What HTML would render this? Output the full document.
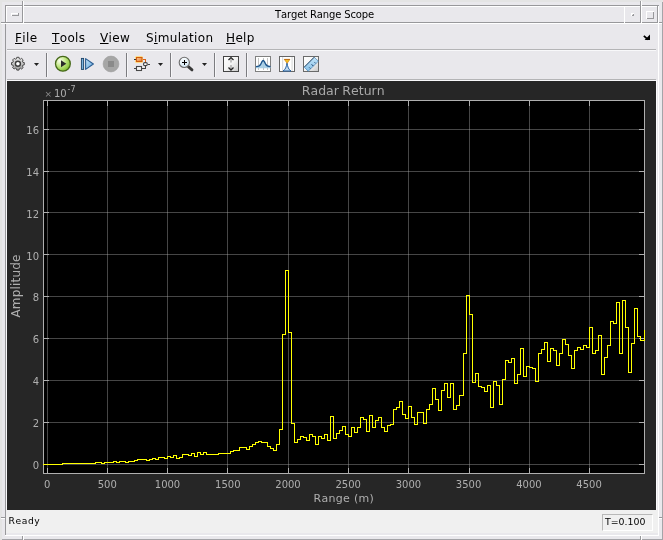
<!DOCTYPE html>
<html><head><meta charset="utf-8">
<style>
html,body{margin:0;padding:0;}
body{width:663px;height:540px;position:relative;overflow:hidden;background:#e4e4e4;font-family:"DejaVu Sans","Liberation Sans",sans-serif;font-kerning:none;}
.a{position:absolute;}
.d{position:absolute;background:#98989b;}
.w{position:absolute;background:#fff;}
.t{position:absolute;white-space:nowrap;line-height:1;}
.m{font-size:12px;color:#000;top:32px;letter-spacing:0.350px;}
.xl{font-size:10px;color:#afafaf;top:480px;width:40px;text-align:center;}
.yl{font-size:10px;color:#afafaf;width:30px;text-align:right;left:9px;}
svg{position:absolute;left:0;top:0;}
</style></head><body><div class="a" id="root" style="left:0;top:0;width:663px;height:540px;will-change:transform;">
<div class="a" style="left:2px;top:2px;width:660px;height:537px;background:#e9e8ec;"></div>
<div class="a" style="left:662px;top:2px;width:1px;height:538px;background:#a4a4a8;"></div>
<div class="a" style="left:2px;top:539px;width:661px;height:1px;background:#a4a4a8;"></div>
<div class="d" style="left:5px;top:5px;width:654px;height:1px"></div>
<div class="d" style="left:5px;top:5px;width:1px;height:531px"></div>
<div class="w" style="left:658px;top:6px;width:1px;height:530px"></div>
<div class="w" style="left:5px;top:535px;width:654px;height:1px"></div>
<div class="w" style="left:6px;top:6px;width:651px;height:1px"></div>
<div class="w" style="left:6px;top:6px;width:1px;height:17px"></div>
<div class="d" style="left:1px;top:22px;width:657px;height:1px"></div>
<div class="w" style="left:1px;top:23px;width:657px;height:1px"></div>
<div class="d" style="left:22px;top:1px;width:1px;height:22px"></div>
<div class="w" style="left:23px;top:1px;width:1px;height:22px"></div>
<div class="w" style="left:624px;top:6px;width:1px;height:17px"></div>
<div class="d" style="left:640px;top:1px;width:1px;height:22px"></div>
<div class="w" style="left:641px;top:1px;width:1px;height:22px"></div>
<div class="d" style="left:657px;top:6px;width:1px;height:17px"></div>
<div class="d" style="left:659px;top:22px;width:3px;height:1px"></div>
<div class="w" style="left:659px;top:23px;width:3px;height:1px"></div>
<div class="w" style="left:11px;top:13px;width:7px;height:1px"></div>
<div class="w" style="left:11px;top:13px;width:1px;height:3px"></div>
<div class="d" style="left:12px;top:15px;width:7px;height:1px"></div>
<div class="d" style="left:18px;top:13px;width:1px;height:3px"></div>
<div class="w" style="left:631px;top:13px;width:3px;height:1px"></div>
<div class="w" style="left:631px;top:13px;width:1px;height:3px"></div>
<div class="d" style="left:632px;top:15px;width:2px;height:1px"></div>
<div class="d" style="left:633px;top:14px;width:1px;height:2px"></div>
<div class="w" style="left:646px;top:11px;width:8px;height:1px"></div>
<div class="w" style="left:646px;top:11px;width:1px;height:8px"></div>
<div class="d" style="left:647px;top:18px;width:7px;height:1px"></div>
<div class="d" style="left:653px;top:12px;width:1px;height:7px"></div>
<div class="d" style="left:1px;top:517px;width:4px;height:1px"></div>
<div class="w" style="left:1px;top:518px;width:4px;height:1px"></div>
<div class="d" style="left:659px;top:517px;width:3px;height:1px"></div>
<div class="w" style="left:659px;top:518px;width:3px;height:1px"></div>
<div class="d" style="left:22px;top:536px;width:1px;height:4px"></div>
<div class="w" style="left:23px;top:536px;width:1px;height:4px"></div>
<div class="d" style="left:640px;top:536px;width:1px;height:4px"></div>
<div class="w" style="left:641px;top:536px;width:1px;height:4px"></div>
<div class="t" id="title" style="left:275px;top:10px;font-size:10px;color:#000;letter-spacing:-0.14px">Target Range Scope</div>
<div class="t m" style="left:15px"><u>F</u>ile</div>
<div class="t m" style="left:52px"><u>T</u>ools</div>
<div class="t m" style="left:100px"><u>V</u>iew</div>
<div class="t m" style="left:146px">S<u>i</u>mulation</div>
<div class="t m" style="left:226px"><u>H</u>elp</div>
<svg width="663" height="540" viewBox="0 0 663 540" style="pointer-events:none"><path d="M650 34.600V40H644.600Z" fill="#000"/><path d="M643.800 35.800L648 39.500" stroke="#000" stroke-width="1.700" fill="none"/></svg>
<div class="a" style="left:7px;top:49px;width:649px;height:1px;background:#b4b4b6"></div>
<div class="a" style="left:7px;top:50px;width:649px;height:1px;background:#f8f8fa"></div>
<div class="a" style="left:7px;top:79px;width:649px;height:1px;background:#b4b4b6"></div>
<div class="a" style="left:7px;top:80px;width:649px;height:1px;background:#f8f8fa"></div>
<div class="a" style="left:6px;top:80px;width:1px;height:430px;background:#f8f8fa"></div>
<div class="a" style="left:656px;top:80px;width:1px;height:430px;background:#fcfcfe"></div>
<div class="a" style="left:46px;top:53px;width:1px;height:24px;background:#7c7c80"></div><div class="a" style="left:47px;top:53px;width:1px;height:24px;background:#f6f6f8"></div>
<div class="a" style="left:126px;top:53px;width:1px;height:24px;background:#7c7c80"></div><div class="a" style="left:127px;top:53px;width:1px;height:24px;background:#f6f6f8"></div>
<div class="a" style="left:170px;top:53px;width:1px;height:24px;background:#7c7c80"></div><div class="a" style="left:171px;top:53px;width:1px;height:24px;background:#f6f6f8"></div>
<div class="a" style="left:214px;top:53px;width:1px;height:24px;background:#7c7c80"></div><div class="a" style="left:215px;top:53px;width:1px;height:24px;background:#f6f6f8"></div>
<div class="a" style="left:246px;top:53px;width:1px;height:24px;background:#7c7c80"></div><div class="a" style="left:247px;top:53px;width:1px;height:24px;background:#f6f6f8"></div>
<svg width="663" height="540" viewBox="0 0 663 540">
<defs>
<linearGradient id="gg" x1="0" y1="0" x2="0" y2="1"><stop offset="0" stop-color="#ececec"/><stop offset="1" stop-color="#9a9a9a"/></linearGradient>
<radialGradient id="gp" cx="0.3" cy="0.3" r="0.8"><stop offset="0" stop-color="#fbfff0"/><stop offset="0.45" stop-color="#c4e888"/><stop offset="1" stop-color="#7cbc28"/></radialGradient>
<linearGradient id="gb" x1="0" y1="0" x2="1" y2="1"><stop offset="0" stop-color="#ffffff"/><stop offset="0.5" stop-color="#f4f4f4"/><stop offset="1" stop-color="#c8c8c8"/></linearGradient>
<linearGradient id="gs" x1="0" y1="0" x2="1" y2="0"><stop offset="0" stop-color="#8ab4e0"/><stop offset="1" stop-color="#2a5a9a"/></linearGradient>
<linearGradient id="gr" x1="0" y1="0" x2="0" y2="1"><stop offset="0" stop-color="#c4e4f8"/><stop offset="1" stop-color="#84c0e8"/></linearGradient>
<linearGradient id="gt" x1="0" y1="0" x2="1" y2="1"><stop offset="0" stop-color="#c8e4f8"/><stop offset="1" stop-color="#5ca4dc"/></linearGradient>
<linearGradient id="go" x1="0" y1="0" x2="1" y2="1"><stop offset="0" stop-color="#fcd0a0"/><stop offset="1" stop-color="#e87828"/></linearGradient>
<linearGradient id="gl" x1="0" y1="0" x2="0.300" y2="1"><stop offset="0" stop-color="#ffffff"/><stop offset="1" stop-color="#d4e8f4"/></linearGradient>
</defs>
<path d="M22.92 62.33 L24.30 62.58 L24.30 64.82 L22.92 65.07 L22.42 66.28 L23.22 67.44 L21.64 69.02 L20.48 68.22 L19.27 68.72 L19.02 70.10 L16.78 70.10 L16.53 68.72 L15.32 68.22 L14.16 69.02 L12.58 67.44 L13.38 66.28 L12.88 65.07 L11.50 64.82 L11.50 62.58 L12.88 62.33 L13.38 61.12 L12.58 59.96 L14.16 58.38 L15.32 59.18 L16.53 58.68 L16.78 57.30 L19.02 57.30 L19.27 58.68 L20.48 59.18 L21.64 58.38 L23.22 59.96 L22.42 61.12Z" fill="url(#gg)" stroke="#4a4a4a" stroke-width="1" stroke-linejoin="round"/>
<circle cx="17.9" cy="63.7" r="2.5" fill="#fff" stroke="#3c3c3c" stroke-width="1.4"/>
<path d="M34 63h5l-2.5 3z" fill="#222"/>
<path d="M158 63h5l-2.5 3z" fill="#222"/>
<path d="M202 63h5l-2.5 3z" fill="#222"/>
<circle cx="62.9" cy="63.8" r="7.4" fill="url(#gp)" stroke="#46681a" stroke-width="1.3"/>
<path d="M61 60.300 L66.300 63.800 L61 67.300z" fill="#2a2a2a"/>
<rect x="81.400" y="58.400" width="2.200" height="11" fill="#7ab0dc" stroke="#1c4468" stroke-width="0.9"/>
<path d="M85.6 58.6 L93.4 64 L85.6 69.4z" fill="url(#gt)" stroke="#2a5c90" stroke-width="1.1" stroke-linejoin="round"/>
<circle cx="111" cy="64" r="7.900" fill="#a6a6a6" stroke="#9c9c9c" stroke-width="0.600"/>
<rect x="108" y="61" width="6" height="6" fill="#8a8a8a"/>
<rect x="135" y="56" width="8" height="7" rx="1.5" fill="#ffe08c"/>
<rect x="136.500" y="57.500" width="5.500" height="4" fill="url(#go)" stroke="#d05c10" stroke-width="1.1"/>
<g shape-rendering="crispEdges">
<path d="M134 59.500h2" stroke="#333" stroke-width="1" fill="none"/>
<path d="M142.500 59.500h3v3" stroke="#d8621a" stroke-width="1.2" fill="none"/>
<path d="M134 68.500h2 M142 68.500h3.500v-3 M147.500 64.500h2.500" stroke="#444" stroke-width="1" fill="none"/>
</g>
<rect x="136.500" y="66.500" width="5" height="4" fill="#f4f4f4" stroke="#484848" stroke-width="1.1"/>
<rect x="143.500" y="62.600" width="3.800" height="3" rx="1.300" fill="#fff" stroke="#444" stroke-width="1.100"/>
<path d="M188.300 66.600 L192 69.900" stroke="#383838" stroke-width="2.800" stroke-linecap="round"/>
<circle cx="184.300" cy="62.400" r="5.100" fill="url(#gl)" stroke="#6c6c6c" stroke-width="1.100"/>
<path d="M182 62.500h5 M184.500 60v5" stroke="#000" stroke-width="1" shape-rendering="crispEdges"/>
<rect x="223.500" y="56.500" width="15" height="15" fill="url(#gb)" stroke="#444" stroke-width="1"/>
<path d="M228.500 60 L231 57.600 L233.500 60" stroke="#222" stroke-width="1.3" fill="none"/>
<path d="M231 59v3.500 M231 65v4" stroke="#aaa" stroke-width="1.4"/>
<path d="M228.500 67.500 L231 70 L233.500 67.500" stroke="#222" stroke-width="1.3" fill="none"/>
<rect x="255.500" y="56.500" width="15" height="15" fill="#fff" stroke="#808080" stroke-width="1"/>
<path d="M258.500 58v12 M263.500 58v12 M267.500 58v12" stroke="#c4c4c4" stroke-width="1" shape-rendering="crispEdges"/>
<path d="M256 66.700 C259 66.700 260 66.200 261 63.800 C262 61.300 262.500 60.500 263.200 60.500 C263.900 60.500 264.400 61.300 265.400 63.800 C266.400 66.200 267.400 66.700 270.500 66.700 L270.500 68.300 L256 68.300z" fill="#a4cce4" fill-opacity="0.9"/>
<path d="M256 66.700 C259 66.700 260 66.200 261 63.800 C262 61.300 262.500 60.500 263.200 60.500 C263.900 60.500 264.400 61.300 265.400 63.800 C266.400 66.200 267.400 66.700 270.500 66.700" fill="none" stroke="#1c548c" stroke-width="1.300"/>
<rect x="279.500" y="56.500" width="15" height="15" fill="#fff" stroke="#666" stroke-width="1"/>
<rect x="282" y="57" width="1.200" height="14" fill="#dcdcdc"/><rect x="291.500" y="57" width="1.200" height="14" fill="#dcdcdc"/>
<path d="M283 71 C285.500 69.500 286.300 67 287 63 C287.700 67 288.500 69.500 291 71z" fill="#c4dcf0" stroke="#2a64a4" stroke-width="1"/>
<path d="M284.400 59.500h5.400l-2.700 3.800z" fill="#f4c020" stroke="#d08010" stroke-width="0.700"/>
<path d="M284.200 59.400h5.800" stroke="#c06c10" stroke-width="1"/>
<rect x="303.500" y="56.500" width="15" height="15" fill="url(#gb)" stroke="#6a6a6a" stroke-width="1"/>
<path d="M304.200 67.200 L314.200 57.200 L318.300 61.200 L308.200 71.200z" fill="url(#gr)" stroke="#4a86b8" stroke-width="0.700"/>
<path d="M304.200 67.200 L314.200 57.200" stroke="#2a4660" stroke-width="0.900"/>
<path d="M309.300 67.500l1 1 M311.600 64.300l1.800 1.800 M314.600 62.300l1 1" stroke="#1c3c64" stroke-width="1"/>
</svg>

<div class="a" style="left:7px;top:81px;width:649px;height:429px;background:#262626"></div>
<div class="a" style="left:43px;top:100px;width:602px;height:374px;background:#000"></div>
<svg width="663" height="540" viewBox="0 0 663 540" shape-rendering="crispEdges">
<g stroke="#afafaf" stroke-opacity="0.4" stroke-width="1">
<path d="M47.5 101V473"/>
<path d="M107.5 101V473"/>
<path d="M167.5 101V473"/>
<path d="M227.5 101V473"/>
<path d="M288.5 101V473"/>
<path d="M348.5 101V473"/>
<path d="M408.5 101V473"/>
<path d="M469.5 101V473"/>
<path d="M529.5 101V473"/>
<path d="M589.5 101V473"/>
<path d="M44 464.5H644"/>
<path d="M44 422.5H644"/>
<path d="M44 380.5H644"/>
<path d="M44 338.5H644"/>
<path d="M44 296.5H644"/>
<path d="M44 254.5H644"/>
<path d="M44 212.5H644"/>
<path d="M44 171.5H644"/>
<path d="M44 129.5H644"/>
</g>
<g stroke="#afafaf" stroke-width="1">
<path d="M47.5 468V473"/><path d="M47.5 101V106"/>
<path d="M107.5 468V473"/><path d="M107.5 101V106"/>
<path d="M167.5 468V473"/><path d="M167.5 101V106"/>
<path d="M227.5 468V473"/><path d="M227.5 101V106"/>
<path d="M288.5 468V473"/><path d="M288.5 101V106"/>
<path d="M348.5 468V473"/><path d="M348.5 101V106"/>
<path d="M408.5 468V473"/><path d="M408.5 101V106"/>
<path d="M469.5 468V473"/><path d="M469.5 101V106"/>
<path d="M529.5 468V473"/><path d="M529.5 101V106"/>
<path d="M589.5 468V473"/><path d="M589.5 101V106"/>
<path d="M44 464.5H49"/><path d="M639 464.5H644"/>
<path d="M44 422.5H49"/><path d="M639 422.5H644"/>
<path d="M44 380.5H49"/><path d="M639 380.5H644"/>
<path d="M44 338.5H49"/><path d="M639 338.5H644"/>
<path d="M44 296.5H49"/><path d="M639 296.5H644"/>
<path d="M44 254.5H49"/><path d="M639 254.5H644"/>
<path d="M44 212.5H49"/><path d="M639 212.5H644"/>
<path d="M44 171.5H49"/><path d="M639 171.5H644"/>
<path d="M44 129.5H49"/><path d="M639 129.5H644"/>
</g>
<rect x="43.5" y="100.5" width="601" height="373" fill="none" stroke="#afafaf" stroke-width="1"/>
<path d="M43 464.5H47.5H50.5H53.5H56.5H59.5H62.5V463.5H65.5H68.5H71.5H74.5H77.5H80.5H83.5H86.5H89.5H92.5H95.5V462.5H98.5H101.5V463.5H104.5V462.5H107.5H110.5H113.5V461.5H116.5V462.5H119.5V461.5H122.5H125.5V462.5H128.5V461.5H131.5H134.5V460.5H137.5V459.5H140.5H143.5H146.5V460.5H149.5V459.5H152.5V458.5H155.5V459.5H158.5V457.5H161.5H164.5V458.5H167.5V456.5H170.5V457.5H173.5V455.5H176.5V458.5H179.5V457.5H182.5V454.5H185.5H188.5V455.5H191.5V453.5H194.5V456.5H197.5V452.5H200.5V454.5H203.5V452.5H206.5V454.5H209.5H212.5H215.5H218.5V453.5H221.5H224.5H227.5H230.5V451.5H233.5V450.5H236.5H239.5V447.5H243.5H246.5V449.5H249.5V446.5H252.5V444.5H255.5V442.5H258.5V441.5H261.5V442.5H264.5H267.5V446.5H270.5V448.5H273.5V450.5H276.5V444.5H279.5V429.5H282.5V334.5H285.5V270.5H288.5V332.5H291.5V423.5H294.5V442.5H297.5V439.5H300.5V436.5H303.5V437.5H306.5V440.5H309.5V434.5H312.5V436.5H315.5V444.5H318.5V436.5H321.5V438.5H324.5V434.5H327.5V440.5H330.5V416.5H333.5V438.5H336.5V433.5H339.5V430.5H342.5V426.5H345.5V434.5H348.5V436.5H351.5V427.5H354.5V432.5H357.5V427.5H360.5V417.5H363.5V419.5H366.5V431.5H369.5V415.5H372.5V427.5H375.5V420.5H378.5V417.5H381.5V427.5H384.5V431.5H387.5V425.5H390.5V424.5H393.5V409.5H396.5V407.5H399.5V401.5H402.5V414.5H405.5V418.5H408.5V406.5H411.5V417.5H414.5V424.5H417.5V412.5H420.5H423.5V423.5H426.5V409.5H429.5V404.5H432.5V388.5H435.5V399.5H438.5V410.5H441.5V390.5H444.5V383.5H447.5V397.5H450.5V383.5H453.5V409.5H456.5V405.5H459.5V395.5H463.5V353.5H466.5V295.5H469.5V314.5H472.5V382.5H475.5V373.5H478.5V386.5H481.5V387.5H484.5V391.5H487.5V385.5H490.5V407.5H493.5V381.5H496.5V385.5H499.5V404.5H502.5V379.5H505.5V360.5H508.5V362.5H511.5V358.5H514.5V383.5H517.5V374.5H520.5V348.5H523.5V376.5H526.5V366.5H529.5V367.5H532.5V368.5H535.5V381.5H538.5V353.5H541.5V349.5H544.5V342.5H547.5V361.5H550.5V348.5H553.5V350.5H556.5V365.5H559.5V353.5H562.5V339.5H565.5V344.5H568.5V355.5H571.5V368.5H574.5V350.5H577.5V347.5H580.5V349.5H583.5V345.5H586.5V347.5H589.5V327.5H592.5V353.5H595.5V350.5H598.5V335.5H601.5V374.5H604.5V357.5H607.5V345.5H610.5V321.5H613.5V323.5H616.5V302.5H619.5V353.5H622.5V300.5H625.5V327.5H628.5V372.5H631.5V343.5H634.5V308.5H637.5V336.5H640.5V340.5H644.5V330.5H645" fill="none" stroke="#ffff00" stroke-width="1"/>
</svg>

<div class="t" style="left:301.800px;top:85px;font-size:12.500px;word-spacing:-0.500px;color:#a8a8a8">Radar Return</div>
<div class="t" style="left:313.600px;top:493px;font-size:11px;letter-spacing:0.280px;color:#afafaf">Range (m)</div>
<div class="t" style="left:-24px;top:280px;width:80px;height:12px;text-align:center;font-size:12px;letter-spacing:0.170px;color:#afafaf;transform:rotate(-90deg);transform-origin:center">Amplitude</div>
<div class="t xl" style="left:27.1px">0</div>
<div class="t xl" style="left:87.3px">500</div>
<div class="t xl" style="left:147.5px">1000</div>
<div class="t xl" style="left:207.8px">1500</div>
<div class="t xl" style="left:268.0px">2000</div>
<div class="t xl" style="left:328.2px">2500</div>
<div class="t xl" style="left:388.4px">3000</div>
<div class="t xl" style="left:448.6px">3500</div>
<div class="t xl" style="left:508.9px">4000</div>
<div class="t xl" style="left:569.1px">4500</div>
<div class="t yl" style="top:460.9px">0</div>
<div class="t yl" style="top:419.0px">2</div>
<div class="t yl" style="top:377.1px">4</div>
<div class="t yl" style="top:335.3px">6</div>
<div class="t yl" style="top:293.4px">8</div>
<div class="t yl" style="top:251.5px">10</div>
<div class="t yl" style="top:209.6px">12</div>
<div class="t yl" style="top:167.7px">14</div>
<div class="t yl" style="top:125.9px">16</div>
<div class="t" style="left:44.500px;top:90px;font-size:9px;color:#8c8c8c">×</div><div class="t" style="left:54px;top:89px;font-size:10px;color:#afafaf">10</div><div class="t" style="left:67.500px;top:86px;font-size:8px;color:#afafaf">-7</div>
<div class="a" style="left:6px;top:510px;width:652px;height:23px;background:#f0f0f0"></div>
<div class="a" style="left:602px;top:514px;width:51px;height:17px;box-sizing:border-box;border:1px solid #fff;border-top-color:#b8b8b8;border-left-color:#b8b8b8"></div>
<div class="t" style="left:8.600px;top:516px;font-size:9.200px;letter-spacing:0.550px;color:#000">Ready</div>
<div class="t" style="left:605px;top:516.500px;font-size:9.400px;color:#000">T=0.100</div>
</div></body></html>
